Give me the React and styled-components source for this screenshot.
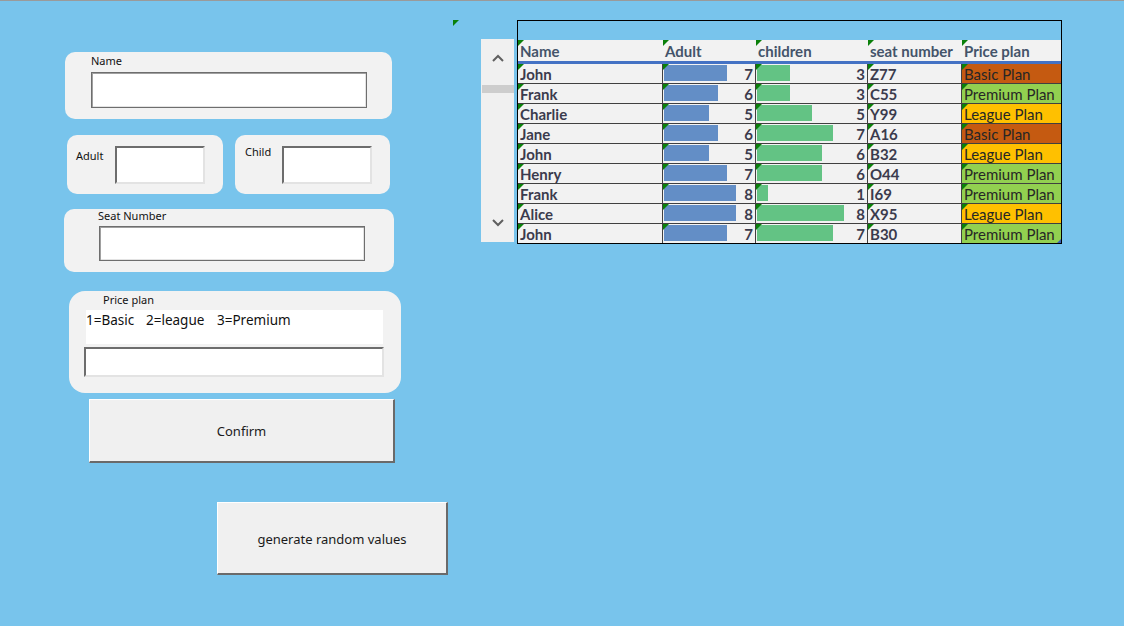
import React from 'react';
import styled, { createGlobalStyle } from 'styled-components';

const Global = createGlobalStyle`
  html, body { margin: 0; padding: 0; }
  body { background: #78C4EC; font-family: "Noto Sans", "Open Sans", sans-serif; }
`;

const Page = styled.div`
  width: 1124px;
  height: 626px;
  box-sizing: border-box;
  border-top: 1px solid #9a9a9a;
  background: #78C4EC;
  display: flex;
  overflow: hidden;
`;

/* ---------- Form (left) ---------- */
const FormColumn = styled.div`
  width: 453px;
  flex: none;
  display: flex;
  flex-direction: column;
  align-items: flex-start;
  padding-top: 51px;
`;

const Group = styled.div`
  box-sizing: border-box;
  width: ${p => p.$w}px;
  height: ${p => p.$h}px;
  margin-left: ${p => p.$x || 0}px;
  margin-top: ${p => p.$mt || 0}px;
  padding: ${p => p.$pad || '0'};
  background: #F2F2F2;
  border-radius: ${p => p.$r || 10}px;
  display: flex;
  flex-direction: ${p => (p.$row ? 'row' : 'column')};
  align-items: flex-start;
  flex: none;
`;

const GroupRow = styled.div`
  display: flex;
  gap: 12px;
  margin-left: ${p => p.$x}px;
  margin-top: ${p => p.$mt}px;
`;

const Label = styled.div`
  font-size: 11px;
  line-height: 14px;
  color: #111;
  width: ${p => (p.$w ? `${p.$w}px` : 'auto')};
  margin-left: ${p => p.$ml || 0}px;
  margin-top: ${p => p.$mt || 0}px;
  flex: none;
  white-space: nowrap;
`;

const TextBox = styled.div`
  box-sizing: border-box;
  width: ${p => p.$w}px;
  height: ${p => p.$h}px;
  margin-left: ${p => p.$ml || 0}px;
  margin-top: ${p => p.$mt || 0}px;
  background: #fff;
  flex: none;
  ${p =>
    p.$boxed
      ? `border: 1px solid #6e6e6e; box-shadow: inset 1px 1px 0 #a0a0a0, inset -1px -1px 0 #e3e3e3;`
      : `border-style: solid; border-width: 2px 2px 2px 2px; border-color: #6d6d6d #e3e3e3 #e3e3e3 #6d6d6d;`}
`;

const Legend = styled.div`
  box-sizing: border-box;
  width: 297px;
  height: 34px;
  margin-left: 2px;
  margin-top: 3px;
  padding-top: 2px;
  background: #fff;
  display: flex;
  font-size: 13.5px;
  line-height: 16px;
  color: #111;
`;

const LegendItem = styled.span`
  width: ${p => (p.$w ? `${p.$w}px` : 'auto')};
  flex: none;
  white-space: nowrap;
`;

const Button = styled.div`
  box-sizing: border-box;
  width: ${p => p.$w}px;
  height: ${p => p.$h}px;
  margin-left: ${p => p.$x}px;
  margin-top: ${p => p.$mt}px;
  background: #F0F0F0;
  border-style: solid;
  border-width: 1px 2px 2px 1px;
  border-color: #ffffff #6a6a6a #6a6a6a #ffffff;
  display: flex;
  align-items: center;
  justify-content: center;
  padding-top: ${p => p.$pt || 0}px;
  font-size: 13px;
  color: #1a1a1a;
  flex: none;
`;

/* ---------- Sheet (right) ---------- */
const SheetArea = styled.div`
  display: flex;
  align-items: flex-start;
  flex: none;
`;

const ErrorMark = styled.div`
  width: 0;
  height: 0;
  border-top: 6px solid #0a800a;
  border-right: 6px solid transparent;
  margin-top: 19px;
`;

const Scrollbar = styled.div`
  margin-left: 22px;
  margin-top: 38px;
  width: 33px;
  height: 203px;
  background: #F0F0F0;
  display: flex;
  flex-direction: column;
  align-items: center;
`;

const ArrowBox = styled.div`
  height: 38px;
  width: 100%;
  display: flex;
  align-items: center;
  justify-content: center;
`;

const Thumb = styled.div`
  align-self: flex-end;
  width: 32px;
  height: 8px;
  margin-top: 8px;
  background: #CDCDCD;
`;

const Spacer = styled.div`
  flex: 1;
`;

const Table = styled.div`
  margin-left: 3px;
  margin-top: 19px;
  width: 545px;
  box-sizing: border-box;
  border: 1px solid #000;
  font-family: "Lato", "Noto Sans", sans-serif;
  font-size: 15px;
`;

const TitleStrip = styled.div`
  height: 19px;
`;

const cols = '145px 93px 112px 94px 99px';

const HeaderRow = styled.div`
  display: grid;
  grid-template-columns: ${cols};
  height: 24px;
  box-sizing: border-box;
  background: #F2F2F2;
  border-bottom: 3px solid #4472C4;
`;

const HeaderCell = styled.div`
  position: relative;
  box-sizing: border-box;
  padding-left: 2px;
  padding-top: 2px;
  line-height: 19px;
  font-weight: 700;
  color: #44546A;
  white-space: nowrap;
  &::before {
    content: '';
    position: absolute;
    left: 0;
    top: 0;
    border-top: 6px solid #0a800a;
    border-right: 6px solid transparent;
  }
`;

const Row = styled.div`
  display: grid;
  grid-template-columns: ${cols};
  height: ${p => (p.$last ? 19 : 20)}px;
  box-sizing: border-box;
  border-bottom: ${p => (p.$last ? 'none' : '1px solid #404040')};
  background: #F2F2F2;
`;

const Cell = styled.div`
  position: relative;
  box-sizing: border-box;
  border-right: ${p => (p.$end ? 'none' : '1px solid #404040')};
  padding-left: ${p => (p.$bar ? 1 : 2)}px;
  padding-right: ${p => (p.$bar ? 2 : 0)}px;
  padding-top: 1px;
  line-height: 18px;
  font-weight: ${p => (p.$regular ? 400 : 700)};
  color: ${p => (p.$regular ? '#262626' : '#3b3b4d')};
  background: ${p => p.$bg || 'transparent'};
  white-space: nowrap;
  overflow: hidden;
  display: flex;
  align-items: flex-start;
  &::before {
    content: '';
    position: absolute;
    left: 0;
    top: 0;
    border-top: 6px solid #0a800a;
    border-right: 6px solid transparent;
  }
  ${p =>
    p.$handle
      ? `&::after { content: ''; position: absolute; right: 0; bottom: 0; border-bottom: 4px solid #3a5db0; border-left: 4px solid transparent; }`
      : ''}
`;

const Bar = styled.div`
  height: 16px;
  margin-top: 0;
  background: ${p => p.$color};
  flex: none;
`;

const Num = styled.span`
  margin-left: auto;
`;

const Chevron = ({ up }) => (
  <svg width="12" height="8" viewBox="0 0 12 8">
    <polyline
      points={up ? '1,7 6,2 11,7' : '1,1 6,6 11,1'}
      fill="none"
      stroke="#606060"
      strokeWidth="2"
    />
  </svg>
);

const planColors = {
  'Basic Plan': '#C55A11',
  'Premium Plan': '#92D050',
  'League Plan': '#FFC000',
};

const rows = [
  ['John', 7, 3, 'Z77', 'Basic Plan'],
  ['Frank', 6, 3, 'C55', 'Premium Plan'],
  ['Charlie', 5, 5, 'Y99', 'League Plan'],
  ['Jane', 6, 7, 'A16', 'Basic Plan'],
  ['John', 5, 6, 'B32', 'League Plan'],
  ['Henry', 7, 6, 'O44', 'Premium Plan'],
  ['Frank', 8, 1, 'I69', 'Premium Plan'],
  ['Alice', 8, 8, 'X95', 'League Plan'],
  ['John', 7, 7, 'B30', 'Premium Plan'],
];

export default function App() {
  return (
    <>
      <Global />
      <Page>
        <FormColumn>
          <Group $w={327} $h={67} $x={65} $pad="2px 0 0 26px">
            <Label>Name</Label>
            <TextBox $boxed $w={276} $h={36} $mt={4} />
          </Group>

          <GroupRow $x={67} $mt={16}>
            <Group $row $w={156} $h={59} $pad="11px 0 0 9px">
              <Label $w={39} $mt={3}>Adult</Label>
              <TextBox $w={90} $h={38} />
            </Group>
            <Group $row $w={155} $h={59} $pad="10px 0 0 10px">
              <Label $w={37}>Child</Label>
              <TextBox $w={90} $h={38} $mt={1} />
            </Group>
          </GroupRow>

          <Group $w={330} $h={63} $x={64} $mt={15} $pad="0 0 0 34px">
            <Label>Seat Number</Label>
            <TextBox $boxed $w={266} $h={35} $ml={1} $mt={3} />
          </Group>

          <Group $w={332} $h={102} $x={69} $mt={19} $r={16} $pad="2px 0 0 15px">
            <Label $ml={19}>Price plan</Label>
            <Legend>
              <LegendItem $w={60}>1=Basic</LegendItem>
              <LegendItem $w={71}>2=league</LegendItem>
              <LegendItem>3=Premium</LegendItem>
            </Legend>
            <TextBox $w={300} $h={30} $mt={3} />
          </Group>

          <Button $w={306} $h={64} $x={89} $mt={6}>Confirm</Button>
          <Button $w={231} $h={73} $x={217} $mt={39} $pt={2}>generate random values</Button>
        </FormColumn>

        <SheetArea>
          <ErrorMark />
          <Scrollbar>
            <ArrowBox><Chevron up /></ArrowBox>
            <Thumb />
            <Spacer />
            <ArrowBox><Chevron /></ArrowBox>
          </Scrollbar>
          <Table>
            <TitleStrip />
            <HeaderRow>
              <HeaderCell>Name</HeaderCell>
              <HeaderCell>Adult</HeaderCell>
              <HeaderCell>children</HeaderCell>
              <HeaderCell>seat number</HeaderCell>
              <HeaderCell>Price plan</HeaderCell>
            </HeaderRow>
            {rows.map((r, i) => {
              const last = i === rows.length - 1;
              return (
                <Row key={i} $last={last}>
                  <Cell>{r[0]}</Cell>
                  <Cell $bar>
                    <Bar $color="#638EC6" style={{ width: r[1] * 9 }} />
                    <Num>{r[1]}</Num>
                  </Cell>
                  <Cell $bar>
                    <Bar $color="#63C384" style={{ width: r[2] * 10.9 }} />
                    <Num>{r[2]}</Num>
                  </Cell>
                  <Cell>{r[3]}</Cell>
                  <Cell $end $regular $bg={planColors[r[4]]} $handle={last}>
                    {r[4]}
                  </Cell>
                </Row>
              );
            })}
          </Table>
        </SheetArea>
      </Page>
    </>
  );
}
